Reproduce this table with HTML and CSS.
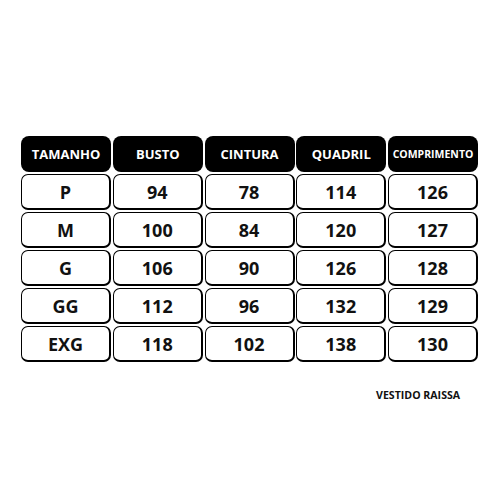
FILE: index.html
```html
<!DOCTYPE html>
<html lang="pt">
<head>
<meta charset="utf-8">
<title>Tabela de medidas</title>
<link rel="stylesheet" href="styles.css">
</head>
<body>
<main class="page">
  <div class="table">
    <div class="head">TAMANHO</div>
    <div class="head">BUSTO</div>
    <div class="head">CINTURA</div>
    <div class="head">QUADRIL</div>
    <div class="head small">COMPRIMENTO</div>

    <div class="cell">P</div><div class="cell">94</div><div class="cell">78</div><div class="cell">114</div><div class="cell">126</div>
    <div class="cell">M</div><div class="cell">100</div><div class="cell">84</div><div class="cell">120</div><div class="cell">127</div>
    <div class="cell">G</div><div class="cell">106</div><div class="cell">90</div><div class="cell">126</div><div class="cell">128</div>
    <div class="cell">GG</div><div class="cell">112</div><div class="cell">96</div><div class="cell">132</div><div class="cell">129</div>
    <div class="cell">EXG</div><div class="cell">118</div><div class="cell">102</div><div class="cell">138</div><div class="cell">130</div>
  </div>
  <p class="caption">VESTIDO RAISSA</p>
</main>
</body>
</html>
```
FILE: styles.css
```css
html, body {
  margin: 0;
  padding: 0;
  background: #ffffff;
}

body {
  width: 500px;
  height: 500px;
  font-family: "Open Sans", "Liberation Sans", sans-serif;
  color: #111;
}

.page {
  padding: 136px 0 0 21px;
}

.table {
  display: grid;
  grid-template-columns: repeat(5, 90px);
  grid-auto-rows: 36px;
  column-gap: 1.75px;
  row-gap: 2px;
}

.head {
  background: #000;
  color: #fff;
  border-radius: 8px;
  display: flex;
  align-items: center;
  justify-content: center;
  font-weight: 700;
  font-size: 13px;
}

.head.small {
  font-size: 10.5px;
}

.cell {
  box-sizing: border-box;
  background: #fff;
  border: 1px solid #000;
  border-right-width: 2px;
  border-bottom-width: 2px;
  border-radius: 7px;
  display: flex;
  align-items: center;
  justify-content: center;
  font-weight: 700;
  font-size: 18px;
  color: #111;
}

.caption {
  margin: 26px 0 0 355px;
  font-weight: 700;
  font-size: 10.6px;
  color: #111;
}
```
